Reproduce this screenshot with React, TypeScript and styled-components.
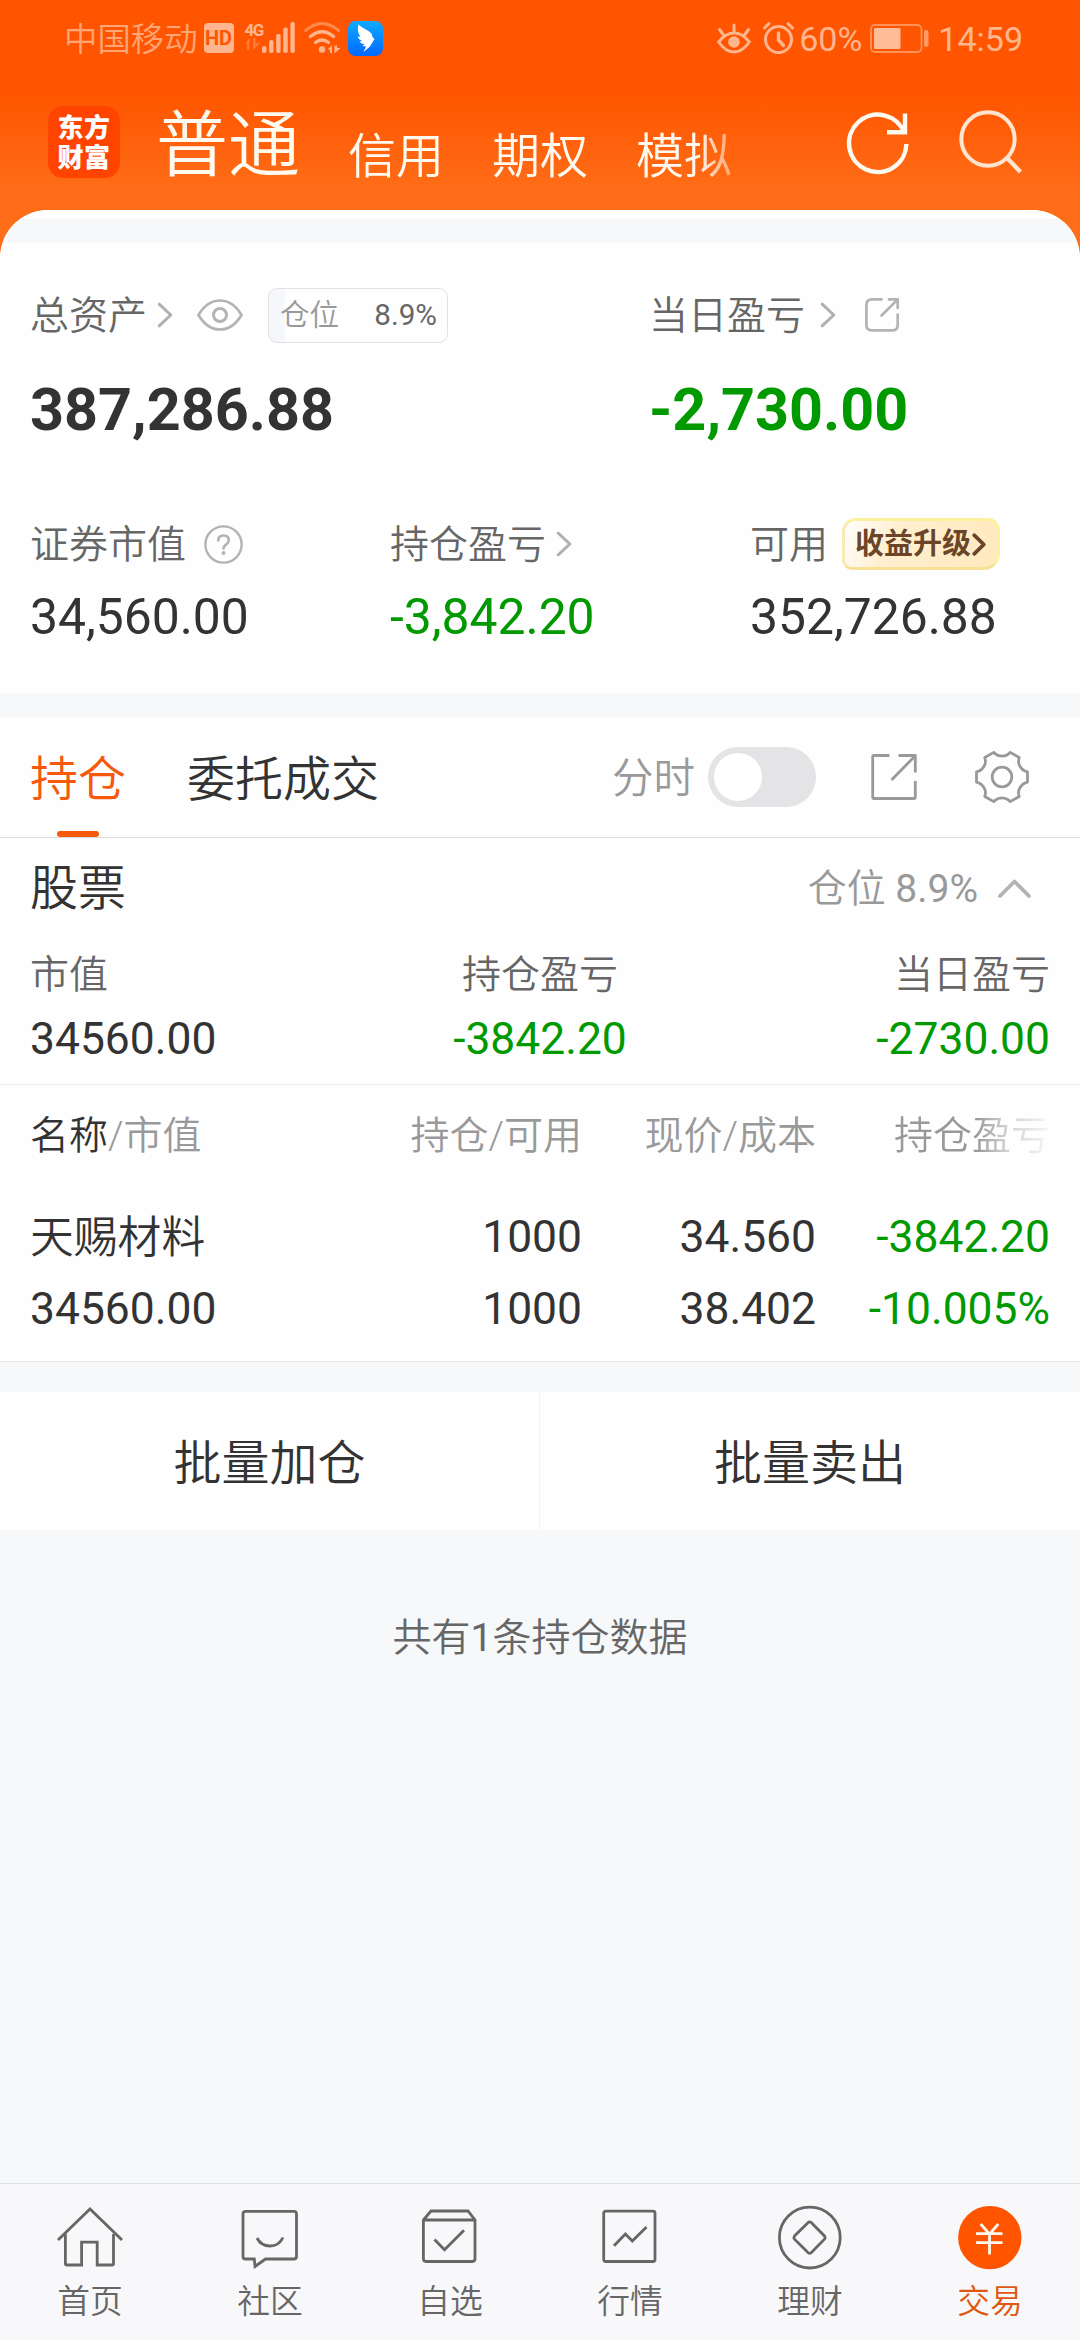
import React from "react";
import styled, { createGlobalStyle } from "styled-components";

const INK = "#333333";
const MID = "#666666";
const SOFT = "#999999";
const GREEN = "#009900";
const ORANGE = "#f4590c";
const CANVAS = "#f7f8fa";

const GlobalStyle = createGlobalStyle`
  html, body { margin: 0; padding: 0; background: ${CANVAS}; }
  * { box-sizing: border-box; }
  body {
    font-family: Roboto, "Noto Sans CJK SC", sans-serif;
    color: ${INK};
    -webkit-font-smoothing: antialiased;
  }
  svg { display: block; flex: none; overflow: visible; }
`;

const Screen = styled.div`
  width: 1080px;
  height: 2340px;
  display: flex;
  flex-direction: column;
  background: ${CANVAS};
  overflow: hidden;
`;

/* ---------- header ---------- */

const Header = styled.header`
  height: 258px;
  background: linear-gradient(180deg, #ff5500 0, #ff5500 92px, #ff6b16 185px, #ff6f1c 258px);
`;

const StatusBar = styled.div`
  height: 76px;
  padding: 0 57px 0 64px;
  display: flex;
  align-items: center;
  justify-content: space-between;
  color: #ffb68f;
`;

const StatusGroup = styled.div`
  display: flex;
  align-items: center;
`;

const Carrier = styled.span`
  font-size: 33.4px;
  line-height: 40px;
  font-weight: 350;
  color: #ffa676;
  margin-right: 6px;
  padding-top: 3px;
`;

const HdBadge = styled.span`
  width: 30px;
  height: 30px;
  border-radius: 4px;
  background: #ffb68f;
  color: #ff5500;
  font-size: 20px;
  line-height: 31px;
  font-weight: 700;
  text-align: center;
`;

const Signal = styled.div`
  display: flex;
  align-items: flex-end;
  height: 32px;
  margin-left: 11px;
`;

const NetType = styled.div`
  width: 17px;
  height: 32px;
  font-size: 17px;
  line-height: 16px;
  font-weight: 700;
  letter-spacing: -1.5px;
`;

const StatusText = styled.span`
  font-size: 34px;
  line-height: 40px;
  padding-top: 2px;
`;

const NavBar = styled.nav`
  height: 134px;
  padding: 30px 56px 0 48px;
  display: flex;
  align-items: flex-start;
`;

const Logo = styled.div`
  width: 72px;
  height: 72px;
  border-radius: 15px;
  background: #ff4400;
  color: #fff;
  font-size: 26px;
  line-height: 30px;
  font-weight: 900;
  text-align: center;
  padding-top: 7px;
  display: flex;
  flex-direction: column;
  letter-spacing: 0.6px;
`;

const NavTabs = styled.div`
  width: 580px;
  height: 100px;
  margin-left: 36px;
  display: flex;
  align-items: flex-start;
  color: #fffaf0;
  mask-image: linear-gradient(90deg, #000 542px, transparent 600px);
`;

const NavTab = styled.span<{ $active?: boolean }>`
  font-size: ${(p) => (p.$active ? 72 : 48)}px;
  line-height: 86px;
  margin-top: ${(p) => (p.$active ? -3 : 8)}px;
  margin-right: 48px;
  white-space: nowrap;
  font-weight: 350;
`;

const NavIcons = styled.div`
  display: flex;
  margin-left: auto;
  padding-top: 4px;
  gap: 47px;
`;

/* ---------- summary ---------- */

const Sheet = styled.main`
  flex: 1;
  margin-top: -48px;
  border-radius: 48px 48px 0 0;
  overflow: hidden;
  background: ${CANVAS};
  display: flex;
  flex-direction: column;
`;

const SheetLip = styled.div`
  height: 9px;
  background: #fff;
`;

const Gap = styled.div<{ $h: number }>`
  height: ${(p) => p.$h}px;
  background: ${CANVAS};
`;

const Summary = styled.section`
  height: 450px;
  padding: 44px 30px 0;
  background: #fefefe;
`;

const SummaryRow = styled.div<{ $cols: string; $top?: number }>`
  display: grid;
  grid-template-columns: ${(p) => p.$cols};
  margin-top: ${(p) => p.$top ?? 0}px;
`;

const LabelLine = styled.div<{ $h: number }>`
  height: ${(p) => p.$h}px;
  display: flex;
  align-items: center;
`;

const Label = styled.span`
  font-size: 39px;
  line-height: 56px;
  font-weight: 350;
  color: ${MID};
  white-space: nowrap;
  padding-top: 1px;
`;

const BigValue = styled.div<{ $down?: boolean }>`
  margin-top: 31px;
  font-size: 59.3px;
  line-height: 72px;
  font-weight: 700;
  color: ${(p) => (p.$down ? GREEN : INK)};
`;

const Value = styled.div<{ $down?: boolean }>`
  margin-top: 17px;
  font-size: 49.8px;
  line-height: 60px;
  color: ${(p) => (p.$down ? GREEN : INK)};
`;

const IconSlot = styled.span<{ $left: number }>`
  margin-left: ${(p) => p.$left}px;
  display: flex;
`;

const PositionChip = styled.div`
  width: 180px;
  height: 55px;
  margin-left: 25px;
  padding: 0 10px 0 11px;
  border: 1px solid #e2e2e2;
  border-radius: 9px;
  display: flex;
  align-items: center;
  justify-content: space-between;
  background: linear-gradient(90deg, #f6f7fb 16px, #fefefe 16px);
  font-size: 29.6px;
  line-height: 52px;
  font-weight: 350;
  color: ${SOFT};
`;

const ChipNumber = styled.span`
  font-weight: 400;
  color: ${MID};
`;

const UpgradeBadge = styled.div`
  width: 158px;
  height: 52px;
  margin-left: 14px;
  display: flex;
  align-items: center;
  border-radius: 14px 12px 16px 10px;
  border: 3px solid;
  border-color: #fbf09c #fbf3a0 #f8e196 #fae9b0;
  background: linear-gradient(115deg, #ffffff 0, #ffefd0 32%, #ffe9bd 100%);
  color: #6b4527;
  font-size: 29px;
  line-height: 46px;
  font-weight: 700;
  white-space: nowrap;
  padding-left: 10px;
`;

/* ---------- holdings ---------- */

const TabsRow = styled.div`
  height: 121px;
  padding: 0 50px 0 30px;
  display: flex;
  align-items: center;
  background: #fefefe;
  border-bottom: 1px solid #dcdcdc;
`;

const Tab = styled.div<{ $active?: boolean }>`
  height: 120px;
  margin-right: 61px;
  display: flex;
  flex-direction: column;
  align-items: center;
  justify-content: space-between;
  font-size: 48px;
  line-height: 60px;
  font-weight: 350;
  padding-top: 33px;
  color: ${(p) => (p.$active ? ORANGE : INK)};
  &::after {
    content: "";
    width: 42px;
    height: 6px;
    border-radius: 3px;
    background: ${(p) => (p.$active ? ORANGE : "transparent")};
  }
`;

const TabTools = styled.div`
  margin-left: auto;
  display: flex;
  align-items: center;
`;

const ToolLabel = styled.span`
  font-size: 41.5px;
  line-height: 60px;
  font-weight: 350;
  color: ${SOFT};
  padding-top: 4px;
`;

const Toggle = styled.div`
  width: 108px;
  height: 60px;
  margin-left: 13px;
  padding: 6px;
  border-radius: 30px;
  background: #e4e4e6;
`;

const Knob = styled.div`
  width: 48px;
  height: 48px;
  border-radius: 50%;
  background: #fff;
`;

const StockPanel = styled.section`
  height: 247px;
  padding: 0 30px;
  background: #fefefe;
  border-bottom: 1px solid #ebebeb;
`;

const StockHead = styled.div`
  height: 101px;
  display: flex;
  align-items: center;
  justify-content: space-between;
`;

const StockTitle = styled.h2`
  margin: 0;
  font-size: 48px;
  line-height: 60px;
  font-weight: 350;
`;

const StockPosition = styled.div`
  display: flex;
  align-items: center;
  gap: 20px;
  padding-right: 19px;
  font-size: 39px;
  line-height: 50px;
  font-weight: 350;
  color: ${SOFT};
`;

const Regular = styled.span`
  font-weight: 400;
`;

const Totals = styled.div`
  display: grid;
  grid-template-columns: 1fr 1fr 1fr;
`;

const Total = styled.div<{ $align: string }>`
  text-align: ${(p) => p.$align};
  padding-top: 11px;
`;

const TotalLabel = styled.div`
  margin-bottom: 3px;
  font-size: 39px;
  line-height: 50px;
  font-weight: 350;
  color: ${MID};
`;

const Num = styled.div<{ $down?: boolean }>`
  font-size: 44.4px;
  line-height: 72px;
  color: ${(p) => (p.$down ? GREEN : INK)};
`;

const Table = styled.section`
  height: 277px;
  padding: 0 30px;
  background: #fefefe;
  border-bottom: 1px solid #e6e6e6;
`;

const TableHead = styled.div`
  height: 116px;
  padding-top: 26px;
  display: grid;
  grid-template-columns: 318px 234px 234px 234px;
  font-size: 39px;
  line-height: 50px;
  font-weight: 350;
  color: ${SOFT};
`;

const HeadCell = styled.div<{ $fade?: boolean }>`
  text-align: right;
  white-space: nowrap;
  &:first-child { text-align: left; }
  mask-image: ${(p) =>
    p.$fade ? "linear-gradient(90deg, #000 160px, rgba(0,0,0,.45) 190px, rgba(0,0,0,.08) 234px)" : "none"};
`;

const SortKey = styled.span`
  color: ${INK};
`;

const TableRow = styled.div`
  display: grid;
  grid-template-columns: 318px 234px 234px 234px;
  text-align: right;
`;

const StockName = styled.div`
  text-align: left;
  font-size: 43.8px;
  line-height: 70px;
  padding-top: 2px;
  font-weight: 350;
`;

const NumLeft = styled(Num)`
  text-align: left;
`;

const BatchBar = styled.div`
  height: 138px;
  display: grid;
  grid-template-columns: 540px 540px;
  background: #fff;
`;

const BatchButton = styled.button`
  border: 0;
  padding: 5px 0 0;
  background: #fff;
  font-family: inherit;
  font-size: 48px;
  line-height: 60px;
  font-weight: 350;
  color: ${INK};
  &:first-child { border-right: 1px solid #f5f5f7; }
`;

const FooterNote = styled.p`
  flex: 1;
  margin: 0;
  padding-top: 83px;
  font-size: 39px;
  line-height: 50px;
  font-weight: 350;
  text-align: center;
  color: ${MID};
`;

/* ---------- bottom bar ---------- */

const BottomBar = styled.nav`
  height: 157px;
  display: grid;
  grid-template-columns: repeat(6, 1fr);
  border-top: 1px solid #e1e1e3;
  background: #f8f8fb;
`;

const BottomItem = styled.div<{ $active?: boolean }>`
  display: flex;
  flex-direction: column;
  align-items: center;
  padding-top: 21px;
  font-size: 32.8px;
  line-height: 40px;
  font-weight: 350;
  color: ${(p) => (p.$active ? "#e0580f" : MID)};
  svg { margin-bottom: 11px; }
`;

/* ---------- icons ---------- */

const Chevron = ({ color = "#b0b0b0", w = 14, h = 24, sw = 3 }: { color?: string; w?: number; h?: number; sw?: number }) => (
  <svg width={w} height={h} viewBox={`0 0 ${w} ${h}`} fill="none" stroke={color} strokeWidth={sw} strokeLinecap="round" strokeLinejoin="round">
    <path d={`M1.2 1.2 L${w - 1.2} ${h / 2} L1.2 ${h - 1.2}`} />
  </svg>
);

const gearPath = (() => {
  const c = 28;
  const at = (deg: number, r: number) => {
    const a = (deg * Math.PI) / 180;
    return `${(c + r * Math.cos(a)).toFixed(2)} ${(c + r * Math.sin(a)).toFixed(2)}`;
  };
  let d = "";
  for (let i = 0; i < 6; i++) {
    const t = i * 60;
    d += `${i ? "L" : "M"}${at(t - 11.5, 26)} L${at(t + 11.5, 26)} L${at(t + 14, 24)} C${at(t + 21, 20.4)} ${at(t + 39, 20.4)} ${at(t + 46, 24)} `;
  }
  return d + "Z";
})();

const Gear = () => (
  <svg width="56" height="56" viewBox="0 0 56 56" fill="none" stroke={SOFT} strokeWidth="2.8" strokeLinejoin="round">
    <path d={gearPath} />
    <circle cx="28" cy="28" r="9.8" />
  </svg>
);

const SignalBars = () => (
  <svg width="34" height="32" viewBox="0 0 34 32" fill="#ffb68f">
    {[7, 13, 19, 25.5, 31].map((h, i) => (
      <rect key={h} x={i * 7.1} y={31 - h} width="4.4" height={h} rx="1.8" />
    ))}
  </svg>
);

const Wifi = () => (
  <svg width="37" height="32" viewBox="0 0 37 32" fill="none" stroke="#ffb68f" strokeWidth="3.4" strokeLinecap="round">
    <path d="M1.7 8.5 Q18 -5.5 34.5 8.5" stroke="#ff8a4d" strokeWidth="3" />
    <path d="M6.5 14.5 Q18 5 29.5 14.5" />
    <path d="M11.5 20.5 Q18 15.5 24.5 20.5" />
    <circle cx="18" cy="27.5" r="3.2" fill="#ffb68f" stroke="none" />
    <path d="M23.500 27.500 L28 23 V31 H26 V27.500Z M30.500 23.500 V31.500 L36.500 26 H33 V23.500Z" fill="#ffb68f" stroke="none" />
  </svg>
);

const WingApp = () => (
  <svg width="35" height="35" viewBox="0 0 35 35">
    <defs>
      <linearGradient id="wing" x1="0" y1="0" x2="0" y2="1">
        <stop offset="0" stopColor="#10aaff" />
        <stop offset="1" stopColor="#0068ff" />
      </linearGradient>
    </defs>
    <rect width="35" height="35" rx="7.5" fill="url(#wing)" />
    <path d="M10.500 3.500 C14 7 20 9 23.500 12.500 L24.500 16 L26.500 18 L22 25.500 L15.500 31 L18 25.500 L14.500 25 L16.500 23 Q12.500 22.500 11.500 20.500 L14.500 20.300 Q10.500 18.500 9.800 15.500 L12.500 15.800 Q8.500 11 10.500 3.500Z" fill="#fff" />
  </svg>
);

const EyeStatus = () => (
  <svg width="34" height="31" viewBox="0 0 34 31" fill="none" stroke="#ffb68f" strokeWidth="3" strokeLinecap="round">
    <path d="M1.700 19 Q8.500 10 17 10 T32.300 19 Q25.500 29 17 29 T1.700 19Z" />
    <circle cx="17" cy="19" r="5.8" fill="#ffb68f" stroke="none" />
    <path d="M17 2 V9 M2.500 6.500 L6.500 12 M31.500 6.500 L27.500 12" />
  </svg>
);

const Alarm = () => (
  <svg width="31" height="32" viewBox="0 0 31 32" fill="none" stroke="#ffb68f" strokeWidth="3" strokeLinecap="round">
    <circle cx="15.5" cy="17.5" r="13" />
    <path d="M15.500 11 V18 L20.500 23.500" strokeWidth="3.4" />
    <path d="M1.500 6 L6 1.500 M29.500 6 L25 1.500" />
  </svg>
);

const Battery = () => (
  <svg width="59" height="29" viewBox="0 0 59 29">
    <rect x="1" y="1" width="50.5" height="27" rx="4" fill="none" stroke="#ff9259" strokeWidth="1.8" />
    <rect x="4" y="4" width="26.5" height="21" rx="1" fill="#ffbc98" />
    <rect x="54" y="6" width="4.5" height="17" rx="2" fill="#ff9a64" />
  </svg>
);

const Refresh = () => (
  <svg width="66" height="66" viewBox="0 0 66 66" fill="none" stroke="#fffaf0" strokeWidth="4.4">
    <path d="M61.400 34 A28.700 28.700 0 1 1 59.500 23" />
    <path d="M60 3.500 V22.300 H42" />
  </svg>
);

const Search = () => (
  <svg width="66" height="66" viewBox="0 0 66 66" fill="none" stroke="#ffe4d0" strokeWidth="4">
    <circle cx="30" cy="29" r="26.7" />
    <path d="M48.600 47.500 L62.500 62" strokeWidth="4.4" />
  </svg>
);

const Eye = () => (
  <svg width="46" height="32" viewBox="0 0 46 32" fill="none" stroke="#b3b3b3" strokeWidth="2.7">
    <path d="M1.500 16 Q10 1.500 23 1.500 T44.500 16 Q36 30.500 23 30.500 T1.500 16Z" strokeLinejoin="round" />
    <circle cx="23" cy="16" r="6.5" strokeWidth="3" />
  </svg>
);

const ShareSmall = () => (
  <svg width="34" height="34" viewBox="0 0 34 34" fill="none" stroke="#b3b3b3" strokeWidth="2.7" strokeLinecap="round" strokeLinejoin="round">
    <path d="M16.500 1.400 H7 Q1.400 1.400 1.400 7 V27 Q1.400 32.300 7 32.300 H27.500 Q32.700 32.300 32.700 27 V16.500" />
    <path d="M24 1.400 H32.700 V10 M32.500 1.600 L16.500 17.500" />
  </svg>
);

const ShareLarge = () => (
  <svg width="48" height="48" viewBox="0 0 48 48" fill="none" stroke={SOFT} strokeWidth="2.8" strokeLinejoin="round">
    <path d="M19.500 2.500 H4 Q2.700 2.500 2.700 4 V44 Q2.700 45.500 4 45.500 H44 Q45.300 45.500 45.300 44 V28" />
    <path d="M28.500 2.500 H45.300 V19.500 M45 3 L21.500 27" />
  </svg>
);

const Help = () => (
  <svg width="39" height="39" viewBox="0 0 39 39" fill="none" stroke="#b3b3b3" strokeWidth="2.4" strokeLinecap="round">
    <circle cx="19.5" cy="19.5" r="18.1" />
    <path d="M14.300 15.500 Q14.300 10.500 19.500 10.500 T24.800 15.200 Q24.800 17.500 22 19.700 Q19.500 21.500 19.500 23.500" strokeWidth="2.7" />
    <circle cx="19.5" cy="28" r="2" fill="#b3b3b3" stroke="none" />
  </svg>
);

const navIcons: Record<string, React.ReactNode> = {
  home: (
    <>
      <path d="M1 35 L33 4 L65 35" />
      <path d="M8.400 29 V58.500 Q8.400 60 10 60 H24.600 V37.200 H40.200 V60 H55 Q56.500 60 56.500 58.500 V29" />
    </>
  ),
  chat: (
    <>
      <path d="M8.500 6.400 H57 Q59.500 6.400 59.500 9 V51.500 Q59.500 54 57 54 H28.500 L18 61.500 L17.300 54 H8.500 Q6 54 6 51.500 V9 Q6 6.400 8.500 6.400Z" />
      <path d="M20 33 Q24 41 33 41 T46 32.500" />
    </>
  ),
  box: (
    <>
      <path d="M6.400 15 L14 6 H51 L58 15 V53.800 Q58 56.500 55.500 56.500 H9 Q6.400 56.500 6.400 53.800 Z M6.400 15 H58" />
      <path d="M17.500 34.500 L27.500 44.800 L47 25.300" />
    </>
  ),
  chart: (
    <>
      <rect x="6.7" y="6.2" width="51.3" height="50.3" rx="2" />
      <path d="M17 40.700 L28.400 29 L35.300 36 L49.500 22" />
    </>
  ),
  diamond: (
    <>
      <circle cx="32.8" cy="32.6" r="30.4" />
      <path d="M31.200 17.600 Q32.700 16.200 34.200 17.600 L47.500 31 Q48.700 32.600 47.500 34.200 L34.200 47.700 Q32.700 49 31.200 47.700 L17.500 34.200 Q16.300 32.600 17.500 31Z" />
    </>
  ),
  yuan: (
    <>
      <circle cx="32.8" cy="32.6" r="31.7" fill="#ff5500" stroke="none" />
      <path d="M23.700 19 L32.500 29.200 L41.300 19 M19 28.700 H45.500 M19 37.700 H45.500 M32.500 29 V49.500" stroke="#fffaf0" />
    </>
  ),
};

const NavIcon = ({ name }: { name: string }) => (
  <svg width="66" height="66" viewBox="0 0 66 66" fill="none" stroke={MID} strokeWidth="2.8">
    {navIcons[name]}
  </svg>
);

const bottomItems = [
  { label: "首页", icon: "home" },
  { label: "社区", icon: "chat" },
  { label: "自选", icon: "box" },
  { label: "行情", icon: "chart" },
  { label: "理财", icon: "diamond" },
  { label: "交易", icon: "yuan", active: true },
];

export default function App() {
  return (
    <Screen>
      <GlobalStyle />
      <Header>
        <StatusBar>
          <StatusGroup>
            <Carrier>中国移动</Carrier>
            <HdBadge>HD</HdBadge>
            <Signal>
              <NetType>
                4G
                <svg width="16" height="12" viewBox="0 0 16 12" fill="#ff7a38">
                  <path d="M0 6 L4.500 0 V12 H2 V6Z M8 0 H10.500 V5 H15.500 L8 12Z" />
                </svg>
              </NetType>
              <SignalBars />
            </Signal>
            <IconSlot $left={8}><Wifi /></IconSlot>
            <IconSlot $left={7}><WingApp /></IconSlot>
          </StatusGroup>
          <StatusGroup>
            <EyeStatus />
            <IconSlot $left={12}><Alarm /></IconSlot>
            <IconSlot $left={5}><StatusText>60%</StatusText></IconSlot>
            <IconSlot $left={8}><Battery /></IconSlot>
            <IconSlot $left={9}><StatusText>14:59</StatusText></IconSlot>
          </StatusGroup>
        </StatusBar>
        <NavBar>
          <Logo>
            <span>东方</span>
            <span>财富</span>
          </Logo>
          <NavTabs>
            <NavTab $active>普通</NavTab>
            <NavTab>信用</NavTab>
            <NavTab>期权</NavTab>
            <NavTab>模拟</NavTab>
          </NavTabs>
          <NavIcons>
            <Refresh />
            <Search />
          </NavIcons>
        </NavBar>
      </Header>

      <Sheet>
        <SheetLip />
        <Gap $h={24} />
        <Summary>
          <SummaryRow $cols="619px 1fr">
            <div>
              <LabelLine $h={56}>
                <Label>总资产</Label>
                <IconSlot $left={11}><Chevron /></IconSlot>
                <IconSlot $left={25}><Eye /></IconSlot>
                <PositionChip>
                  <span>仓位</span>
                  <ChipNumber>8.9%</ChipNumber>
                </PositionChip>
              </LabelLine>
              <BigValue>387,286.88</BigValue>
            </div>
            <div>
              <LabelLine $h={56}>
                <Label>当日盈亏</Label>
                <IconSlot $left={16}><Chevron /></IconSlot>
                <IconSlot $left={30}><ShareSmall /></IconSlot>
              </LabelLine>
              <BigValue $down>-2,730.00</BigValue>
            </div>
          </SummaryRow>
          <SummaryRow $cols="360px 360px 1fr" $top={72}>
            <div>
              <LabelLine $h={52}>
                <Label>证券市值</Label>
                <IconSlot $left={18}><Help /></IconSlot>
              </LabelLine>
              <Value>34,560.00</Value>
            </div>
            <div>
              <LabelLine $h={52}>
                <Label>持仓盈亏</Label>
                <IconSlot $left={11}><Chevron /></IconSlot>
              </LabelLine>
              <Value $down>-3,842.20</Value>
            </div>
            <div>
              <LabelLine $h={52}>
                <Label>可用</Label>
                <UpgradeBadge>
                  收益升级
                  <IconSlot $left={2}><Chevron color="#6b4527" w={12} h={21} sw={3.8} /></IconSlot>
                </UpgradeBadge>
              </LabelLine>
              <Value>352,726.88</Value>
            </div>
          </SummaryRow>
        </Summary>
        <Gap $h={24} />

        <TabsRow>
          <Tab $active>持仓</Tab>
          <Tab>委托成交</Tab>
          <TabTools>
            <ToolLabel>分时</ToolLabel>
            <Toggle><Knob /></Toggle>
            <IconSlot $left={54}><ShareLarge /></IconSlot>
            <IconSlot $left={56}><Gear /></IconSlot>
          </TabTools>
        </TabsRow>

        <StockPanel>
          <StockHead>
            <StockTitle>股票</StockTitle>
            <StockPosition>
              <span>仓位 <Regular>8.9%</Regular></span>
              <svg width="33" height="19" viewBox="0 0 33 19" fill="none" stroke="#b3b3b3" strokeWidth="3.8" strokeLinecap="round" strokeLinejoin="round">
                <path d="M2 17 L16.500 2.500 L31 17" />
              </svg>
            </StockPosition>
          </StockHead>
          <Totals>
            <Total $align="left">
              <TotalLabel>市值</TotalLabel>
              <Num>34560.00</Num>
            </Total>
            <Total $align="center">
              <TotalLabel>持仓盈亏</TotalLabel>
              <Num $down>-3842.20</Num>
            </Total>
            <Total $align="right">
              <TotalLabel>当日盈亏</TotalLabel>
              <Num $down>-2730.00</Num>
            </Total>
          </Totals>
        </StockPanel>

        <Table>
          <TableHead>
            <HeadCell><SortKey>名称</SortKey>/市值</HeadCell>
            <HeadCell>持仓/可用</HeadCell>
            <HeadCell>现价/成本</HeadCell>
            <HeadCell $fade>持仓盈亏</HeadCell>
          </TableHead>
          <TableRow>
            <StockName>天赐材料</StockName>
            <Num>1000</Num>
            <Num>34.560</Num>
            <Num $down>-3842.20</Num>
          </TableRow>
          <TableRow>
            <NumLeft>34560.00</NumLeft>
            <Num>1000</Num>
            <Num>38.402</Num>
            <Num $down>-10.005%</Num>
          </TableRow>
        </Table>
        <Gap $h={30} />
        <BatchBar>
          <BatchButton>批量加仓</BatchButton>
          <BatchButton>批量卖出</BatchButton>
        </BatchBar>
        <FooterNote>共有<Regular>1</Regular>条持仓数据</FooterNote>

        <BottomBar>
          {bottomItems.map((item) => (
            <BottomItem key={item.label} $active={item.active}>
              <NavIcon name={item.icon} />
              {item.label}
            </BottomItem>
          ))}
        </BottomBar>
      </Sheet>
    </Screen>
  );
}
